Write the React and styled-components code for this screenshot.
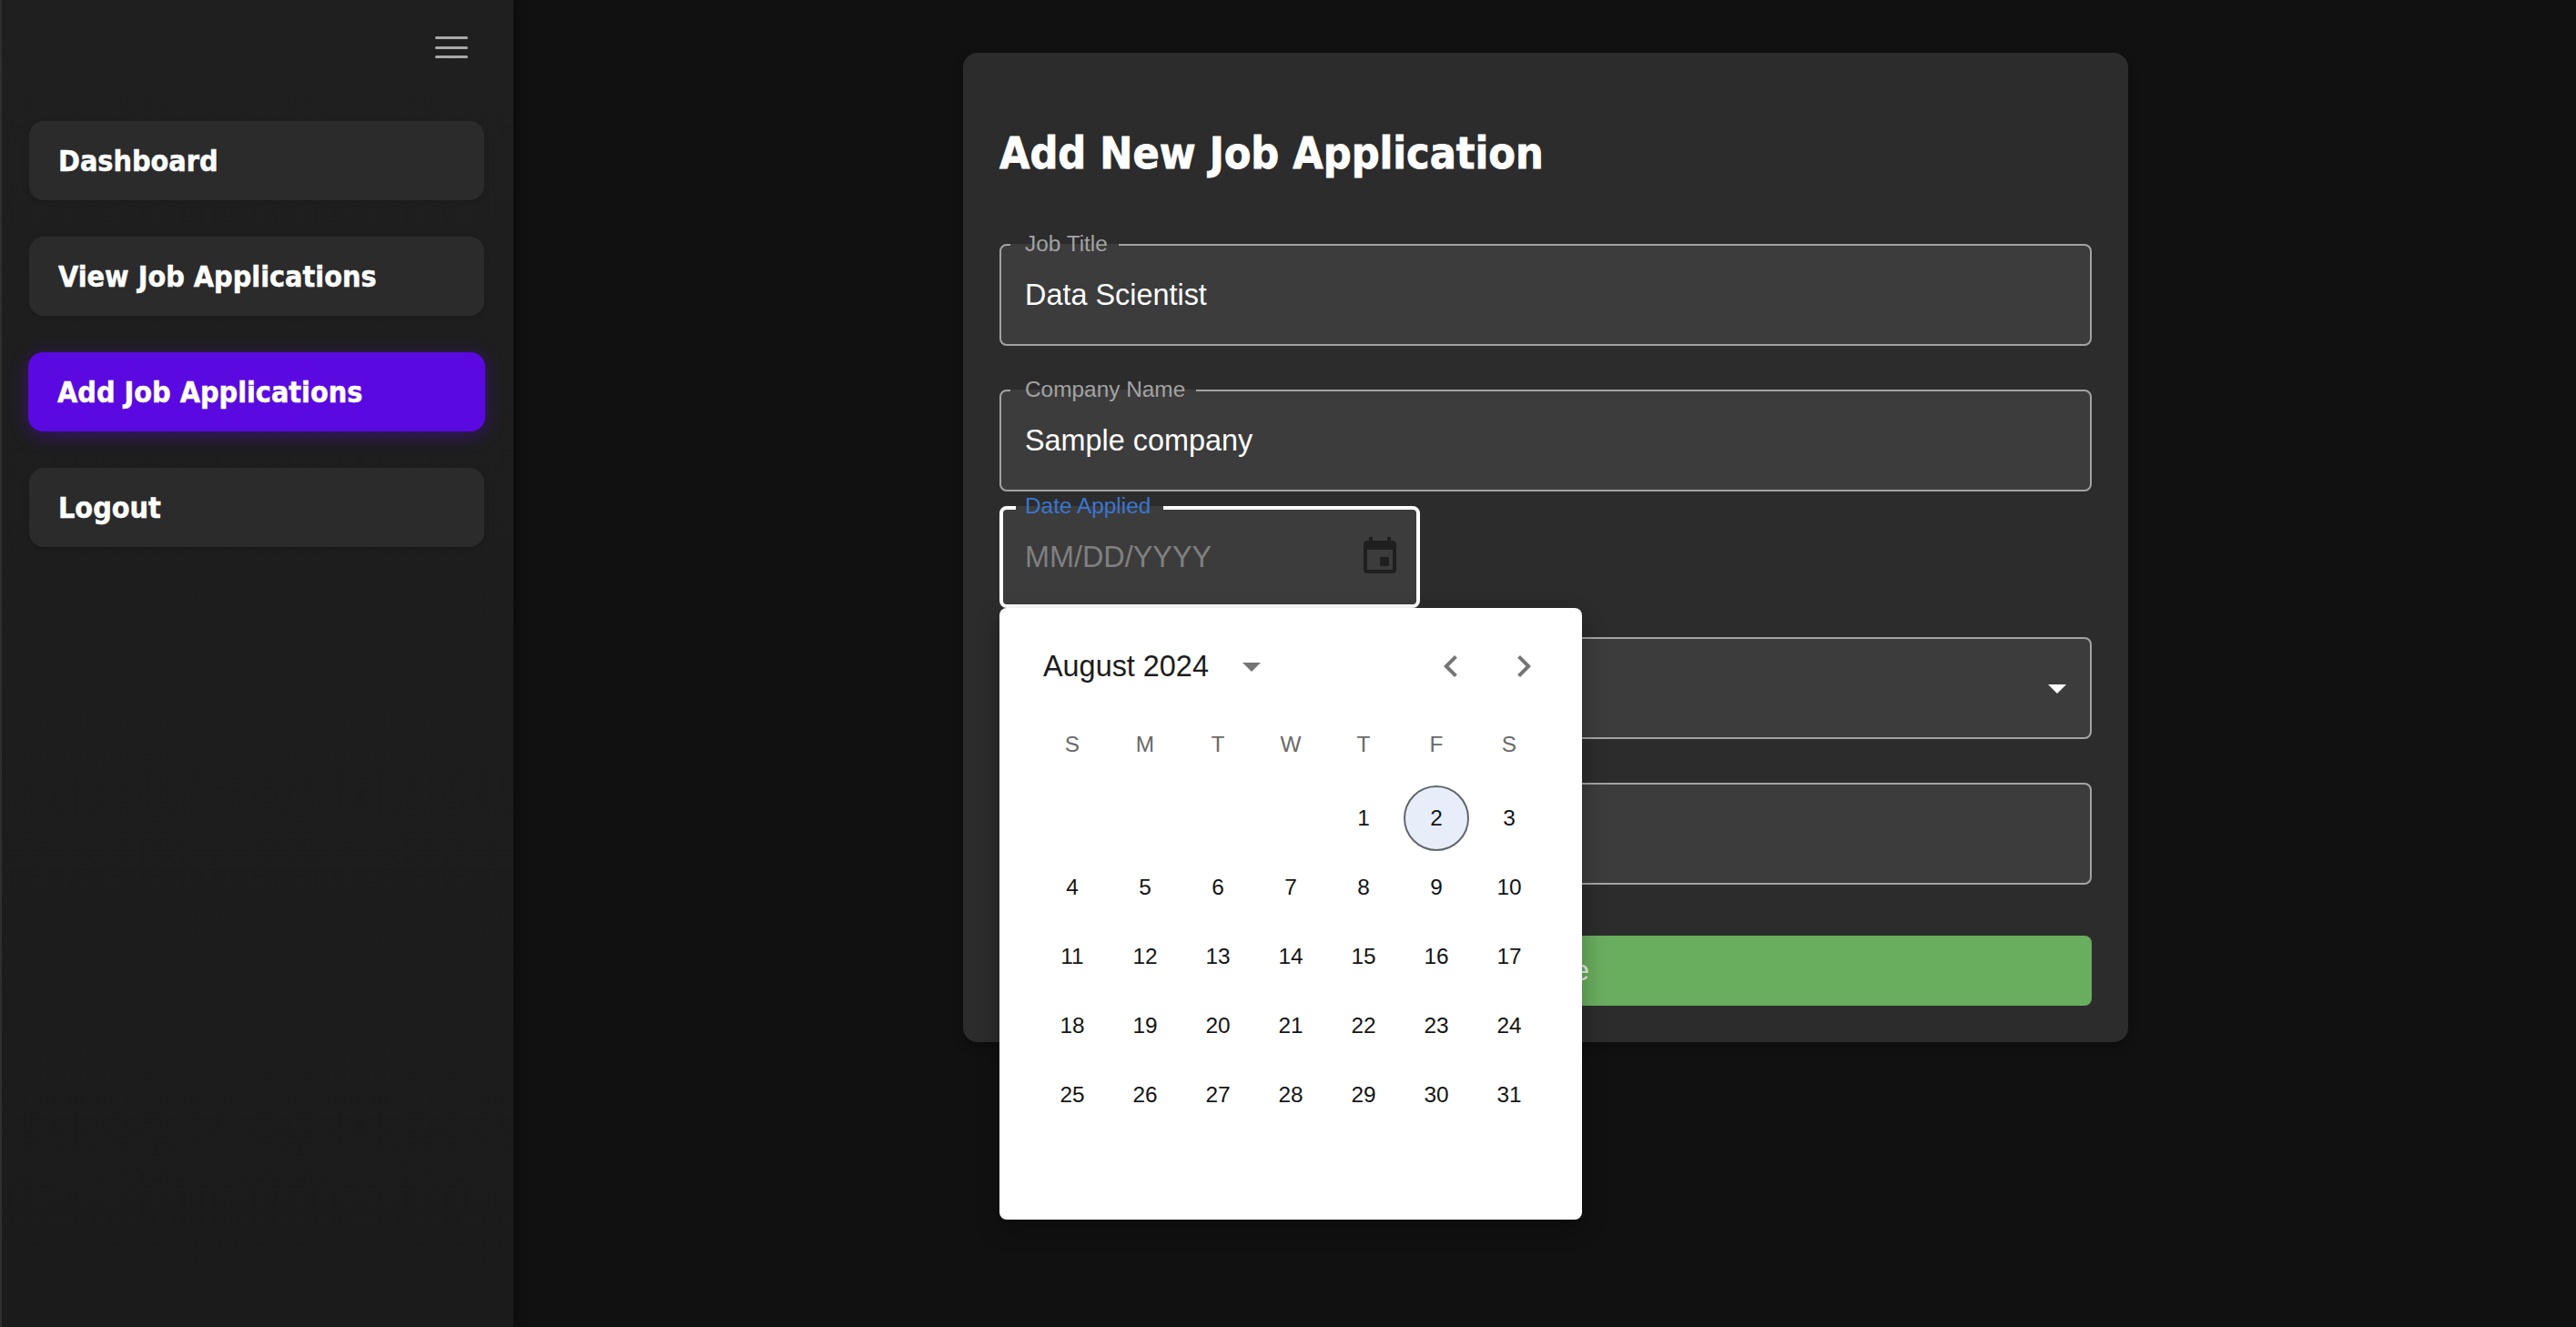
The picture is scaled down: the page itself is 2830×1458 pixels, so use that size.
import React from "react";
import styled, { createGlobalStyle } from "styled-components";

const Global = createGlobalStyle`
  html, body { margin: 0; padding: 0; background: #111111; }
  #root { height: 1458px; overflow: hidden; }
  * { box-sizing: border-box; }
`;

const Page = styled.div`
  display: flex;
  height: 1458px;
  background: #111111;
  font-family: "Liberation Sans", Arial, sans-serif;
`;

const Sidebar = styled.aside`
  width: 564px;
  flex: none;
  border-left: 2px solid #2f2f2f;
  background: linear-gradient(180deg, #1f1f1f, #1b1b1b);
  box-shadow: 4px 0 12px rgba(0, 0, 0, 0.3);
  padding: 40px 32px 0 30px;
`;

const MenuRow = styled.div`
  display: flex;
  justify-content: flex-end;
  padding-right: 18px;
  height: 93px;
`;

const Hamburger = styled.button`
  width: 36px;
  height: 24px;
  padding: 0;
  border: 0;
  background: none;
  display: flex;
  flex-direction: column;
  justify-content: space-between;
  span {
    display: block;
    height: 3px;
    border-radius: 2px;
    background: #a9a9a9;
  }
`;

const Nav = styled.nav`
  display: flex;
  flex-direction: column;
  gap: 40px;
`;

const NavItem = styled.div`
  height: 87px;
  display: flex;
  align-items: center;
  margin: ${(p) => (p.$active ? "0 -1px" : "0")};
  padding-left: 32px;
  border-radius: 16px;
  background: ${(p) => (p.$active ? "#5a0ae0" : "#2b2b2b")};
  box-shadow: ${(p) =>
    p.$active ? "0 4px 20px rgba(98, 0, 234, 0.4)" : "0 2px 6px rgba(0, 0, 0, 0.12)"};
  color: #ffffff;
  font-family: "DejaVu Sans Condensed", "DejaVu Sans", sans-serif;
  font-stretch: condensed;
  font-weight: 700;
  font-size: 32px;
  -webkit-text-stroke: 0.5px #ffffff;
`;

const Main = styled.main`
  flex: 1;
  display: flex;
  justify-content: center;
  align-items: flex-start;
  padding: 58px 492px 0 494px;
`;

const Card = styled.section`
  width: 1280px;
  height: 1087px;
  flex: none;
  background: #2c2c2c;
  border-radius: 16px;
  padding: 83px 40px 0;
  box-shadow: 0 4px 12px rgba(0, 0, 0, 0.3);
`;

const Title = styled.h1`
  margin: 0;
  height: 127px;
  line-height: 54px;
  color: #ffffff;
  font-family: "DejaVu Sans Condensed", "DejaVu Sans", sans-serif;
  font-stretch: condensed;
  font-weight: 700;
  font-size: 48px;
  -webkit-text-stroke: 0.8px #ffffff;
`;

const Field = styled.div`
  position: relative;
  width: ${(p) => (p.$narrow ? "462px" : "100%")};
  height: 112px;
  margin-top: ${(p) => p.$gap}px;
  background: #3c3c3c;
  border-radius: 8px;
  display: flex;
  align-items: center;
  justify-content: space-between;
  padding: 0 28px;
  font-size: 32.4px;
  color: #ffffff;
`;

const Outline = styled.fieldset`
  position: absolute;
  inset: 0;
  margin: 0;
  padding: 0 0 0 ${(p) => (p.$focus ? "14px" : "10px")};
  min-width: 0;
  pointer-events: none;
  border: ${(p) => (p.$focus ? "4px solid #ffffff" : "2px solid #a3a3a3")};
  border-radius: 8px;
`;

const Legend = styled.legend`
  padding: ${(p) => (p.$focus ? "0 14px 0 10px" : "0 12px 0 16px")};
  height: 0;
  line-height: 0;
  font-size: 24.4px;
  transform: translateY(${(p) => (p.$focus ? "-2px" : "-1px")});
  color: ${(p) => (p.$focus ? "#3a76cf" : "#a3a3a3")};
`;

const Placeholder = styled.span`
  color: #808080;
`;

const CalendarIcon = styled.svg`
  width: 48px;
  height: 48px;
  margin-right: -8px;
  fill: #1f1f1f;
`;

const SelectArrow = styled.svg`
  position: absolute;
  right: 14px;
  top: 32px;
  width: 48px;
  height: 48px;
  fill: #ffffff;
`;

const SubmitButton = styled.button`
  display: block;
  width: 100%;
  height: 77px;
  margin-top: 56px;
  border: 0;
  border-radius: 8px;
  background: #69ad5f;
  color: #e6efe4;
  font-family: inherit;
  font-size: 32px;
`;

const Popup = styled.div`
  position: absolute;
  left: 0;
  top: 112px;
  z-index: 5;
  width: 640px;
  height: 672px;
  padding-top: 34px;
  background: #ffffff;
  border-radius: 8px;
  box-shadow: 0 10px 26px rgba(0, 0, 0, 0.3);
  color: #1c1c1c;
`;

const PopupHeader = styled.div`
  height: 60px;
  display: flex;
  align-items: center;
  padding: 0 40px 0 48px;
`;

const MonthLabel = styled.span`
  font-size: 32.4px;
`;

const MonthArrow = styled.svg`
  width: 48px;
  height: 48px;
  margin-left: 23px;
  fill: #757575;
`;

const NavArrows = styled.div`
  margin-left: auto;
  display: flex;
  gap: 32px;
  svg {
    width: 48px;
    height: 48px;
    fill: #757575;
  }
`;

const Week = styled.div`
  display: grid;
  grid-template-columns: repeat(7, 80px);
  padding: 0 40px;
  height: ${(p) => p.$h}px;
  margin-top: ${(p) => p.$mt || 0}px;
  align-items: center;
  justify-items: center;
`;

const WeekDay = styled.span`
  font-size: 24.4px;
  color: #696969;
`;

const DayGrid = styled.div`
  margin-top: 13px;
`;

const Day = styled.span`
  width: 72px;
  height: 72px;
  display: flex;
  align-items: center;
  justify-content: center;
  border-radius: 50%;
  font-size: 24.4px;
  color: #141414;
  background: ${(p) => (p.$today ? "#e8eef9" : "transparent")};
  border: ${(p) => (p.$today ? "2px solid #62666c" : "0")};
`;

const nav = ["Dashboard", "View Job Applications", "Add Job Applications", "Logout"];
const weekDays = ["S", "M", "T", "W", "T", "F", "S"];
const weeks = [
  [null, null, null, null, 1, 2, 3],
  [4, 5, 6, 7, 8, 9, 10],
  [11, 12, 13, 14, 15, 16, 17],
  [18, 19, 20, 21, 22, 23, 24],
  [25, 26, 27, 28, 29, 30, 31],
];

export default function App() {
  return (
    <Page>
      <Global />
      <Sidebar>
        <MenuRow>
          <Hamburger aria-label="menu">
            <span />
            <span />
            <span />
          </Hamburger>
        </MenuRow>
        <Nav>
          {nav.map((n) => (
            <NavItem key={n} $active={n === "Add Job Applications"}>
              {n}
            </NavItem>
          ))}
        </Nav>
      </Sidebar>
      <Main>
        <Card>
          <Title>Add New Job Application</Title>
          <Field $gap={0}>
            <Outline>
              <Legend>Job Title</Legend>
            </Outline>
            Data Scientist
          </Field>
          <Field $gap={48}>
            <Outline>
              <Legend>Company Name</Legend>
            </Outline>
            Sample company
          </Field>
          <Field $gap={16} $narrow>
            <Outline $focus>
              <Legend $focus>Date Applied</Legend>
            </Outline>
            <Placeholder>MM/DD/YYYY</Placeholder>
            <CalendarIcon viewBox="0 0 24 24">
              <path d="M17 12h-5v5h5v-5zM16 1v2H8V1H6v2H5c-1.11 0-1.99.9-1.99 2L3 19c0 1.1.89 2 2 2h14c1.1 0 2-.9 2-2V5c0-1.1-.9-2-2-2h-1V1h-2zm3 18H5V8h14v11z" />
            </CalendarIcon>
            <Popup>
              <PopupHeader>
                <MonthLabel>August 2024</MonthLabel>
                <MonthArrow viewBox="0 0 24 24">
                  <path d="M7 10l5 5 5-5z" />
                </MonthArrow>
                <NavArrows>
                  <svg viewBox="0 0 24 24">
                    <path d="M15.41 16.59 10.83 12l4.58-4.59L14 6l-6 6 6 6z" />
                  </svg>
                  <svg viewBox="0 0 24 24">
                    <path d="M8.59 16.59 13.17 12 8.59 7.41 10 6l6 6-6 6z" />
                  </svg>
                </NavArrows>
              </PopupHeader>
              <Week $h={60} $mt={26}>
                {weekDays.map((d, i) => (
                  <WeekDay key={i}>{d}</WeekDay>
                ))}
              </Week>
              <DayGrid>
                {weeks.map((w, i) => (
                  <Week key={i} $h={76}>
                    {w.map((d, j) =>
                      d ? (
                        <Day key={j} $today={d === 2}>
                          {d}
                        </Day>
                      ) : (
                        <span key={j} />
                      )
                    )}
                  </Week>
                ))}
              </DayGrid>
            </Popup>
          </Field>
          <Field $gap={32}>
            <Outline>
              <Legend />
            </Outline>
            <SelectArrow viewBox="0 0 24 24">
              <path d="M7 10l5 5 5-5z" />
            </SelectArrow>
          </Field>
          <Field $gap={48}>
            <Outline>
              <Legend />
            </Outline>
          </Field>
          <SubmitButton>Create</SubmitButton>
        </Card>
      </Main>
    </Page>
  );
}
